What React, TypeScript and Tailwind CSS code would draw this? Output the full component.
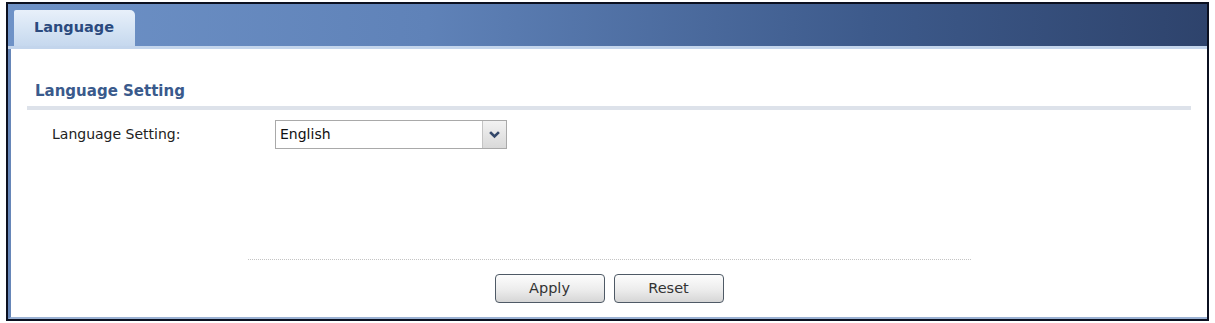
import React from 'react';

const ChevronIcon = () => (
    <svg width="11" height="8" viewBox="0 0 11 8" fill="none" stroke="#34486a" strokeWidth="2.6" strokeLinecap="square"><polyline points="2 2 5.5 5.5 9 2"></polyline></svg>
);

const App: React.FC = () => {
    return (
        <div className="w-[1215px] h-[323px] bg-white overflow-hidden font-['DejaVu_Sans',sans-serif]">
            <div className="ml-[6px] mt-[2px] w-[1203px] h-[319px] border-2 border-[#0b1020] flex flex-col">
                {/* Tab bar */}
                <div className="h-[42px] shrink-0 flex items-end pl-[6px] bg-[linear-gradient(90deg,#6e92c7_0%,#5f82b8_35%,#3d5a8b_72%,#2e436c_100%)]">
                    <div className="w-[121px] h-[36px] rounded-tr-[5px] rounded-tl-[2px] bg-[linear-gradient(180deg,#e8f0fa_0%,#d3e2f3_60%,#c6d8ee_100%)] flex items-center pl-[20px]">
                        <span className="text-[14.5px] font-bold text-[#2b4a7e]">Language</span>
                    </div>
                </div>
                <div className="h-[3px] shrink-0 bg-[#c3d5ec]"></div>

                {/* Content */}
                <div className="flex-1 flex flex-col border-l-[3px] border-l-[#6686b8] border-b-2 border-b-[#9bb2d4] pl-[16px] pr-[16px]">
                    <div className="mt-[32px] pl-[8px] h-[20px] flex items-center">
                        <h2 className="text-[15px] font-bold text-[#3a5a8c]">Language Setting</h2>
                    </div>
                    <div className="mt-[5px] h-[4px] bg-[#dde2ea]"></div>

                    <div className="mt-[10px] flex items-center h-[29px]">
                        <span className="w-[248px] pl-[25px] text-[14px] text-[#222]">Language Setting:</span>
                        <div className="w-[232px] h-[29px] border border-[#a9a9a9] flex bg-white">
                            <span className="flex-1 flex items-center pl-[4px] text-[14px] text-[#111]">English</span>
                            <div className="w-[24px] h-full border-l border-[#c4c4c4] bg-[linear-gradient(180deg,#f2f2f2_0%,#d9d9d9_100%)] flex items-center justify-center">
                                <ChevronIcon />
                            </div>
                        </div>
                    </div>

                    <div className="mt-auto flex justify-center">
                        <div className="w-[723px] border-t border-dotted border-[#c4c4c4]"></div>
                    </div>
                    <div className="mt-[14px] mb-[14px] flex justify-center gap-[9px]">
                        <button className="w-[110px] h-[29px] rounded-[4px] border border-[#4f5a66] bg-[linear-gradient(180deg,#fdfdfd_0%,#ececec_55%,#d6d6d6_100%)] text-[14.5px] text-[#333]">Apply</button>
                        <button className="w-[110px] h-[29px] rounded-[4px] border border-[#4f5a66] bg-[linear-gradient(180deg,#fdfdfd_0%,#ececec_55%,#d6d6d6_100%)] text-[14.5px] text-[#333]">Reset</button>
                    </div>
                </div>
            </div>
        </div>
    );
};

export default App;
